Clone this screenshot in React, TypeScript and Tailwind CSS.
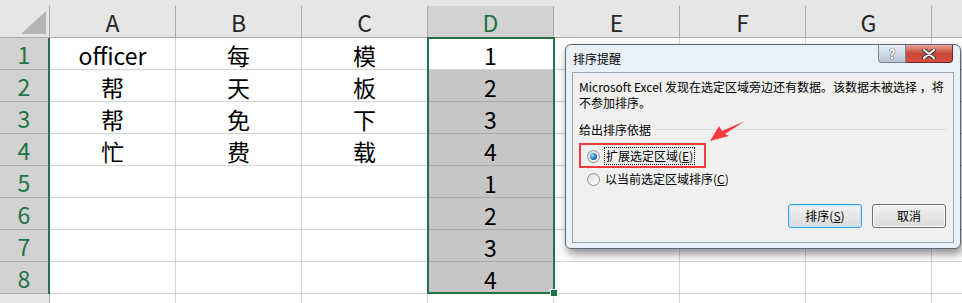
import React from 'react';

const COLS = ['A', 'B', 'C', 'D', 'E', 'F', 'G', 'H'];
const DATA: string[][] = [
  ['officer', '每', '模', '1'],
  ['帮', '天', '板', '2'],
  ['帮', '免', '下', '3'],
  ['忙', '费', '载', '4'],
  ['', '', '', '1'],
  ['', '', '', '2'],
  ['', '', '', '3'],
  ['', '', '', '4'],
];

const CELL_FONT = { fontFamily: '"Noto Sans CJK SC", "Noto Sans", sans-serif' };

function HeaderRow() {
  return (
    <div className="flex h-[38px] bg-[#e6e6e6] border-b border-[#ababab]">
      <div className="w-[50px] shrink-0 pt-[6px]">
        <div className="h-full border-r border-[#ababab] flex items-end justify-end pr-[3px] pb-[3px]">
          <svg width="25" height="23" viewBox="0 0 25 23">
            <polygon points="25,0 25,23 0,23" fill="#b4b4b4" />
          </svg>
        </div>
      </div>
      {COLS.map((c) => (
        <div key={c} className="w-[126px] shrink-0 pt-[6px]">
          <div
            className={
              'h-full border-r border-[#ababab] flex items-center justify-center text-[23px] leading-none pt-[2px] ' +
              (c === 'D' ? 'bg-[#d2d2d2] text-[#217346]' : 'text-[#262626]')
            }
          >
            {c === 'H' ? '' : c}
          </div>
        </div>
      ))}
    </div>
  );
}

function Row({ n, cells }: { n: number; cells: string[] }) {
  return (
    <div className="flex h-[32px]">
      <div className="w-[50px] shrink-0 flex">
        <div className="flex-1 bg-[#d2d2d2] border-b border-[#ababab] flex items-center justify-center text-[23px] leading-none pt-[2px] text-[#217346]">
          {n}
        </div>
        <div className="w-[2px] bg-[#217346]" />
      </div>
      {COLS.map((c, i) => {
        const v = cells[i] ?? '';
        const sel = c === 'D' && n > 1;
        return (
          <div
            key={c}
            className={
              'w-[126px] shrink-0 border-r border-b flex items-center justify-center text-[23px] leading-none pt-[4px] text-black ' +
              (sel ? 'bg-[#c6c6c6] border-[#ababab]' : 'bg-white border-[#d4d4d4]')
            }
          >
            {v}
          </div>
        );
      })}
    </div>
  );
}

function Radio({ checked }: { checked?: boolean }) {
  return (
    <span className="w-[13px] h-[13px] rounded-full border border-[#8f8f8f] bg-gradient-to-br from-[#dcdcdc] to-[#ffffff] flex items-center justify-center shrink-0">
      {checked && (
        <span className="w-[7px] h-[7px] rounded-full bg-[radial-gradient(circle_at_35%_35%,#9fdcff,#1a6fb5_60%,#0b3f73)]" />
      )}
    </span>
  );
}

function Dialog() {
  return (
    <div
      className="absolute left-[565px] top-[44px] w-[396px] h-[205px] rounded-[6px] border border-[#5f6a78] bg-[#eaf0f7] shadow-[2px_5px_10px_rgba(0,0,0,0.45)] text-[12px] text-black"
      style={CELL_FONT}
    >
      <div className="flex h-[27px] items-center justify-between pl-[7px]">
        <span className="pt-[1px]">排序提醒</span>
        <div className="self-start flex mr-[7px]">
          <div className="w-[28px] h-[18px] rounded-bl-[4px] border border-t-0 border-[#7a8796] bg-gradient-to-b from-[#e7edf4] to-[#b8c6d6] flex items-center justify-center text-white font-bold text-[13px] leading-none [text-shadow:0_0_1px_#333,0_0_1px_#333]">
            ?
          </div>
          <div className="w-[47px] h-[18px] rounded-br-[4px] border border-t-0 border-l-0 border-[#6d2a2a] bg-gradient-to-b from-[#e8a394] via-[#c7473a] to-[#d9503f] flex items-center justify-center">
            <svg width="14" height="10" viewBox="0 0 14 10">
              <path d="M2 1 L12 9 M12 1 L2 9" stroke="#333" strokeWidth="4" strokeLinecap="round" />
              <path d="M2 1 L12 9 M12 1 L2 9" stroke="#fff" strokeWidth="2.2" strokeLinecap="round" />
            </svg>
          </div>
        </div>
      </div>
      <div className="mx-[6px] h-[171px] border border-[#9aa5b3] bg-[#f0f0f0] flex flex-col px-[6px] pt-[6px]">
        <div className="leading-[16px]">Microsoft Excel 发现在选定区域旁边还有数据。该数据未被选择 ，将</div>
        <div className="leading-[16px]">不参加排序。</div>
        <div className="mt-[11px] flex items-center gap-[4px] leading-[15px]">
          <span>给出排序依据</span>
          <span className="flex-1 h-px bg-[#d5dfe5]" />
        </div>
        <div className="mt-[9px] flex items-center gap-[4px] pl-[8px] h-[20px]">
          <Radio checked />
          <span className="border border-dotted border-black px-[1px] leading-[16px]">
            扩展选定区域(<u>E</u>)
          </span>
        </div>
        <div className="mt-[3px] flex items-center gap-[5px] pl-[8px] h-[20px]">
          <Radio />
          <span className="leading-[16px]">
            以当前选定区域排序(<u>C</u>)
          </span>
        </div>
        <div className="mt-[15px] flex justify-end gap-[10px] pr-[1px]">
          <div className="w-[74px] h-[24px] rounded-[3px] border border-[#3c9fe6] bg-gradient-to-b from-[#f2f2f2] to-[#dcdcdc] shadow-[inset_0_0_0_1px_#b8e3fb] flex items-center justify-center">
            排序(<u>S</u>)
          </div>
          <div className="w-[74px] h-[24px] rounded-[3px] border border-[#707070] bg-gradient-to-b from-[#f2f2f2] to-[#dcdcdc] shadow-[inset_0_0_0_1px_#fcfcfc] flex items-center justify-center">
            取消
          </div>
        </div>
      </div>
    </div>
  );
}

export default function App() {
  return (
    <div className="relative w-[962px] h-[303px] overflow-hidden bg-white" style={CELL_FONT}>
      <HeaderRow />
      {DATA.map((cells, i) => (
        <Row key={i} n={i + 1} cells={cells} />
      ))}
      <div className="flex h-[32px]">
        <div className="w-[50px] shrink-0 bg-[#e6e6e6] border-r border-[#ababab]" />
        {COLS.map((c) => (
          <div key={c} className="w-[126px] shrink-0 border-r border-[#d4d4d4]" />
        ))}
      </div>

      {/* selection D1:D8 */}
      <div className="absolute left-[427px] top-[37px] w-[128px] h-[257px] border-2 border-[#217346] pointer-events-none" />
      <div className="absolute left-[551px] top-[290px] w-[6px] h-[6px] bg-[#217346] outline outline-1 outline-white" />

      <Dialog />

      {/* annotation */}
      <div className="absolute left-[579px] top-[143px] w-[127px] h-[25px] border-2 border-[#f33b3b]" />
      <svg className="absolute left-[700px] top-[115px]" width="50" height="32" viewBox="0 0 50 32">
        <polygon points="10,26 19,11 22,16 45,6 25,19 29,21" fill="#f33b3b" />
      </svg>
    </div>
  );
}
